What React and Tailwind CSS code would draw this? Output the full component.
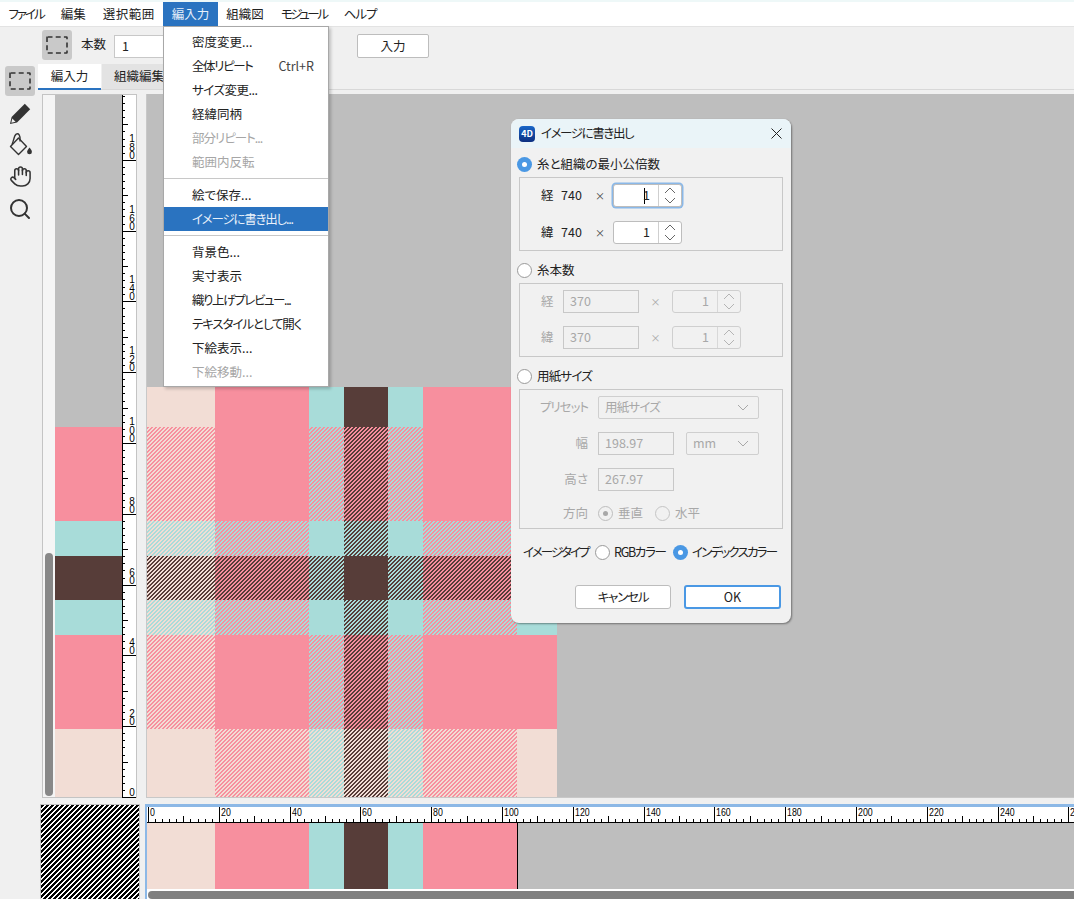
import React from "react";
import { Hand, Search } from "lucide-react";

const BEIGE = "#f2ddd5", PINK = "#f78f9e", TEAL = "#a8dcd9", BROWN = "#573d39";
const REPEAT_WARP = [[68, BEIGE], [94, PINK], [35, TEAL], [44, BROWN], [35, TEAL], [94, PINK]];
const WARP = [...REPEAT_WARP, [40, BEIGE]];
const WEFT = [[40, BEIGE], [94, PINK], [35, TEAL], [44, BROWN], [35, TEAL], [94, PINK], [68, BEIGE]];

function Stripes({ id, a, b, period = 4, on = 2 }) {
  const cells = [];
  for (let y = 0; y < period; y++) for (let x = 0; x < period; x++) if ((x + y) % period < on) cells.push(<rect key={x + "-" + y} x={x} y={y} width="1" height="1" fill={b} />);
  return (
    <pattern id={id} width={period} height={period} patternUnits="userSpaceOnUse">
      <rect width={period} height={period} fill={a} />
      {cells}
    </pattern>
  );
}

function Weave() {
  const colors = [BEIGE, PINK, TEAL, BROWN];
  const pats = [];
  colors.forEach((a, i) => colors.forEach((b, j) => { if (i !== j) pats.push(<Stripes key={i + "" + j} id={"w" + i + j} a={a} b={b} />); }));
  const rects = [];
  let y = 0;
  WEFT.forEach(([h, wc], r) => {
    let x = 0;
    WARP.forEach(([w, c], q) => {
      let fill = c;
      if (r === 0) fill = c;
      else if (q === WARP.length - 1) fill = wc;
      else if (c !== wc) fill = `url(#w${colors.indexOf(c)}${colors.indexOf(wc)})`;
      rects.push(<rect key={r + "-" + q} x={x} y={y} width={w} height={h} fill={fill} />);
      x += w;
    });
    y += h;
  });
  return (
    <svg width="410" height="410" shapeRendering="crispEdges" className="block">
      <defs>{pats}</defs>
      {rects}
    </svg>
  );
}

function VRuler() {
  const items = [];
  for (let u = 0; u <= 198; u += 2) {
    const y = Math.round(797 - 3.54 * u) + 0.5;
    const len = u % 20 === 0 ? 14 : u % 10 === 0 ? 6 : 3;
    items.push(<line key={u} x1="122" x2={122 + len} y1={y} y2={y} stroke="#000" shapeRendering="crispEdges" />);
    if (u % 20 === 0) {
      const s = String(u).split("");
      const bottom = u === 0 ? 796 : y - 1.5;
      items.push(
        <text key={"t" + u} fontSize="10" textAnchor="middle" fill="#000" fontFamily="Liberation Sans">
          {s.map((d, i) => (
            <tspan key={i} x="132" y={bottom - (s.length - 1 - i) * 8.3}>{d}</tspan>
          ))}
        </text>
      );
    }
  }
  return (
    <svg width="14" height="703" viewBox="122 95 14 703" className="block shrink-0 bg-white">
      <line x1="122.5" x2="122.5" y1="95" y2="798" stroke="#000" shapeRendering="crispEdges" />
      {items}
    </svg>
  );
}

function HRuler() {
  const items = [];
  for (let u = 0; u <= 262; u += 2) {
    const x = Math.round(148 + 3.54 * u) + 0.5;
    const len = u % 20 === 0 ? 15 : u % 10 === 0 ? 6 : 3;
    items.push(<line key={u} x1={x} x2={x} y1="822" y2={822 - len} stroke="#000" shapeRendering="crispEdges" />);
    if (u % 20 === 0) {
      const s = String(u);
      items.push(<text key={"t" + u} x={x + 1.5} y="816" fontSize="10.5" fill="#000" fontFamily="Liberation Sans" textLength={s.length * 4.9} lengthAdjust="spacingAndGlyphs">{s}</text>);
    }
  }
  return (
    <svg width="927" height="16" viewBox="147 807 927 16" className="block shrink-0 bg-white">
      <line x1="147" x2="1074" y1="822.5" y2="822.5" stroke="#000" shapeRendering="crispEdges" />
      {items}
    </svg>
  );
}

function DashedSquare() {
  return (
    <svg width="22" height="18" viewBox="0 0 22 18" fill="none" stroke="#333" strokeWidth="1.6">
      <rect x="1" y="1" width="20" height="16" rx="0.5" strokeDasharray="5 3.2" />
    </svg>
  );
}

function Pencil() {
  return (
    <svg width="22" height="22" viewBox="0 0 22 22">
      <path d="M15.8.8 21.2 6.2 8 19.4 1 21 2.6 14Z" fill="#333" />
      <path d="M3.3 15.4 6.6 18.7 2.3 19.7Z" fill="#f0f0f0" />
    </svg>
  );
}

function Bucket() {
  return (
    <svg width="24" height="24" viewBox="0 0 24 24" fill="none" stroke="#333" strokeWidth="1.4">
      <path d="M9.5 5 17.5 13.5 9.5 21.5 1.5 13.5Z" strokeLinejoin="round" />
      <path d="M3 11.5C5 7 5 2.5 7.2 1.2 9.5 0 11.5 2 11 8.5" />
      <path d="M20.6 14.5c1.6 2.2 2.3 3.2 2.3 4.4a2.4 2.4 0 0 1-4.8 0c0-1.2.9-2.4 2.5-4.4Z" fill="#333" stroke="none" />
    </svg>
  );
}

function Chevron({ up, color }) {
  return (
    <svg width="12" height="7" viewBox="0 0 12 7" fill="none" stroke={color} strokeWidth="1">
      <path d={up ? "M1 6 6 1 11 6" : "M1 1 6 6 11 1"} />
    </svg>
  );
}

function Radio({ on, disabled }) {
  if (on && disabled) {
    return (
      <span className="w-[15px] h-[15px] shrink-0 rounded-full border border-[#bdbdbd] flex items-center justify-center">
        <span className="w-[5px] h-[5px] rounded-full bg-[#a8a8a8]" />
      </span>
    );
  }
  if (on) {
    return (
      <span className="w-[15px] h-[15px] shrink-0 rounded-full bg-[#4a98e4] flex items-center justify-center">
        <span className="w-[5px] h-[5px] rounded-full bg-white" />
      </span>
    );
  }
  return <span className={`w-[15px] h-[15px] shrink-0 rounded-full border ${disabled ? "border-[#c4c4c4]" : "border-[#9a9a9a] bg-white"}`} />;
}

function Spinner({ disabled, focused }) {
  const chev = disabled ? "#b4b4b4" : "#666";
  return (
    <div className={`flex w-[69px] h-[23px] rounded-[3px] border ${disabled ? "border-[#cfcfcf] text-[#a8a8a8]" : "border-[#bdbdbd] bg-white text-[#222]"} ${focused ? "border-[#6aa5e0] shadow-[0_0_0_1.5px_#8ab8e8]" : ""}`}>
      <div className={`w-[45px] flex items-center justify-end pr-[8px] border-r ${disabled ? "border-[#d8d8d8]" : "border-[#cfcfcf]"}`}>
        {focused && <span className="h-[16px] border-l border-black mr-[-2px]" />}
        <span>1</span>
      </div>
      <div className="flex-1 flex flex-col items-center justify-center gap-[3px]">
        <Chevron up color={chev} />
        <Chevron color={chev} />
      </div>
    </div>
  );
}

function Field({ w, children }) {
  return <div className={`${w} h-[23px] border border-[#c8c8c8] flex items-center pl-[6px] text-[#a8a8a8]`}>{children}</div>;
}

function Select({ w, label, track }) {
  return (
    <div className={`${w} h-[23px] rounded-[2px] border border-[#cfcfcf] flex items-center justify-between pl-[6px] pr-[9px] text-[#a8a8a8]`}>
      <span className={track || ""}>{label}</span>
      <Chevron color="#a8a8a8" />
    </div>
  );
}

function Section({ label, on, first, track, children }) {
  return (
    <div className={first ? "mt-[8px]" : "mt-[11px]"}>
      <div className="flex items-center h-[16px] gap-[5px] text-[#222]">
        <Radio on={on} />
        <span className={track || ""}>{label}</span>
      </div>
      <div className="mt-[5px] ml-[2px] w-[264px] border border-[#c8c8c8] pt-[6px] flex flex-col">{children}</div>
    </div>
  );
}

function CountRow({ k, val, focused, className }) {
  return (
    <div className={`flex items-center h-[23px] pl-[21px] text-[#222] ${className || ""}`}>
      <span className="w-[20px]">{k}</span>
      <span className="w-[34px]">{val}</span>
      <span className="w-[18px] text-[10px] text-[#444]">×</span>
      <Spinner focused={focused} />
    </div>
  );
}

function ThreadRow({ k, val, className }) {
  return (
    <div className={`flex items-center h-[23px] pl-[21px] text-[#a8a8a8] ${className || ""}`}>
      <span className="w-[22px]">{k}</span>
      <Field w="w-[76px]">{val}</Field>
      <span className="w-[33px] text-center text-[10px]">×</span>
      <Spinner disabled />
    </div>
  );
}

function Dialog() {
  return (
    <div className="absolute left-[511px] top-[119px] w-[280px] h-[504px] rounded-[8px] bg-[#f1f1f1] shadow-[1px_1px_2px_rgba(0,0,0,0.4)] overflow-hidden">
      <div className="h-[29px] bg-[#eaf4f8] flex items-center pl-[8px] pr-[9px] text-[#222]">
        <span className="w-[16px] h-[16px] rounded-[4px] bg-gradient-to-b from-[#1a66c8] to-[#0d2f80] text-white text-[9px] font-bold flex items-center justify-center">4D</span>
        <span className="ml-[6px] flex-1 tracking-[-1.4px]">イメージに書き出し</span>
        <svg width="11" height="11" viewBox="0 0 11 11" stroke="#222" strokeWidth="1"><path d="M.5.5l10 10M10.5.5l-10 10" /></svg>
      </div>
      <div className="pl-[6px]">
        <Section first on label="糸と組織の最小公倍数">
          <CountRow k="経" val="740" focused />
          <CountRow k="緯" val="740" className="mt-[14px] mb-[6px]" />
        </Section>
        <Section label="糸本数">
          <ThreadRow k="経" val="370" />
          <ThreadRow k="緯" val="370" className="mt-[13px] mb-[7px]" />
        </Section>
        <Section label="用紙サイズ" track="tracking-[-0.8px]">
          <div className="flex items-center h-[23px] text-[#a8a8a8]">
            <span className="w-[68px] text-right mr-[10px] tracking-[-1px]">プリセット</span>
            <Select w="w-[161px]" label="用紙サイズ" track="tracking-[-0.8px]" />
          </div>
          <div className="flex items-center h-[23px] mt-[13px] text-[#a8a8a8]">
            <span className="w-[68px] text-right mr-[10px]">幅</span>
            <Field w="w-[76px]">198.97</Field>
            <div className="w-[12px]" />
            <Select w="w-[73px]" label="mm" />
          </div>
          <div className="flex items-center h-[23px] mt-[13px] text-[#a8a8a8]">
            <span className="w-[68px] text-right mr-[10px]">高さ</span>
            <Field w="w-[76px]">267.97</Field>
          </div>
          <div className="flex items-center h-[23px] mt-[11px] mb-[3px] text-[#a8a8a8]">
            <span className="w-[68px] text-right mr-[10px]">方向</span>
            <Radio on disabled />
            <span className="ml-[5px] w-[37px]">垂直</span>
            <Radio disabled />
            <span className="ml-[5px]">水平</span>
          </div>
        </Section>
        <div className="mt-[15px] ml-[6px] h-[17px] flex items-center text-[#222]">
          <span className="w-[72px] whitespace-nowrap tracking-[-2px]">イメージタイプ</span>
          <Radio />
          <span className="ml-[4px] w-[59px] whitespace-nowrap tracking-[-1.3px]">RGBカラー</span>
          <Radio on />
          <span className="ml-[4px] whitespace-nowrap tracking-[-1.8px]">インデックスカラー</span>
        </div>
        <div className="mt-[24px] ml-[58px] flex gap-[13px] text-[#222]">
          <button className="w-[96px] h-[24px] rounded-[3px] border border-[#bdbdbd] bg-white flex items-center justify-center tracking-[-1.2px]">キャンセル</button>
          <button className="w-[97px] h-[24px] rounded-[3px] border-2 border-[#4a98e4] bg-white flex items-center justify-center">OK</button>
        </div>
      </div>
    </div>
  );
}

function MenuRow({ label, shortcut, disabled, active, track }) {
  return (
    <div className={`h-[24px] flex items-center pl-[28px] pr-[14px] justify-between ${active ? "bg-[#2a73c0] text-[#e8f0fa]" : disabled ? "text-[#a6a6a6]" : "text-[#222]"}`}>
      <span className={`whitespace-nowrap ${track || ""}`}>{label}</span>
      {shortcut && <span className="text-[#444]">{shortcut}</span>}
    </div>
  );
}

function Sep() {
  return <div className="h-[9px] pt-[4px]"><div className="h-[1px] bg-[#c8c8c8]" /></div>;
}

function Dropdown() {
  return (
    <div className="absolute left-[163px] top-[26px] w-[166px] h-[361px] bg-white border border-[#a8a8a8] pt-[3px] shadow-[2px_2px_3px_rgba(0,0,0,0.2)]">
      <MenuRow label="密度変更..." />
      <MenuRow label="全体リピート" shortcut="Ctrl+R" track="tracking-[-1.4px]" />
      <MenuRow label="サイズ変更..." track="tracking-[-0.5px]" />
      <MenuRow label="経緯同柄" />
      <MenuRow label="部分リピート..." disabled track="tracking-[-1px]" />
      <MenuRow label="範囲内反転" disabled />
      <Sep />
      <MenuRow label="絵で保存..." />
      <MenuRow label="イメージに書き出し..." active track="tracking-[-1.2px]" />
      <Sep />
      <MenuRow label="背景色..." />
      <MenuRow label="実寸表示" />
      <MenuRow label="織り上げプレビュー..." track="tracking-[-1.4px]" />
      <MenuRow label="テキスタイルとして開く" track="tracking-[-1.1px]" />
      <MenuRow label="下絵表示..." />
      <MenuRow label="下絵移動..." disabled />
    </div>
  );
}

const MENUS = [
  ["ファイル", "tracking-[-2px]"],
  ["編集", ""],
  ["選択範囲", "tracking-[0.5px]"],
  ["編入力", ""],
  ["組織図", ""],
  ["モジュール", "tracking-[-2.4px]"],
  ["ヘルプ", "tracking-[-1px]"],
];

export default function App() {
  return (
    <div className="relative w-[1074px] h-[899px] overflow-hidden bg-[#f0f0f0] text-[12.5px] leading-none font-['Noto_Sans_CJK_JP','Noto_Sans_CJK_SC',sans-serif] [font-feature-settings:'palt']">
      <div className="h-[2px] bg-[#eef8f8]" />
      <div className="h-[24px] bg-white flex text-[#222]">
        {MENUS.map(([m, t], i) => (
          <div key={m} className={`h-full flex items-center px-[8.5px] ${t} ${i === 3 ? "bg-[#2a73c0] text-[#e8f0fa]" : ""}`}>{m}</div>
        ))}
      </div>
      <div className="h-[1px] bg-[#e3e3e3]" />
      <div className="h-[37px] flex items-start pl-[42px] pt-[3px]">
        <div className="w-[30px] h-[30px] rounded-[3px] bg-[#c9c9c9] flex items-center justify-center"><DashedSquare /></div>
        <span className="ml-[9px] mt-[8px] text-[#222]">本数</span>
        <div className="ml-[8px] mt-[5px] w-[60px] h-[23px] border border-[#c8c8c8] bg-white flex items-center pl-[7px] text-[#222]">1</div>
        <button className="ml-[183px] mt-[4px] w-[72px] h-[24px] rounded-[2px] border border-[#bdbdbd] bg-white text-[#222] flex items-center justify-center">入力</button>
      </div>
      <div className="flex h-[835px]">
        <div className="w-[38px] shrink-0 pt-[2px] pl-[5px] flex flex-col">
          <div className="w-[30px] h-[30px] rounded-[3px] bg-[#c9c9c9] flex items-center justify-center"><DashedSquare /></div>
          <div className="mt-[2px] w-[30px] h-[31px] flex items-center justify-center"><Pencil /></div>
          <div className="w-[30px] h-[31px] flex items-center justify-center ml-[1px]"><Bucket /></div>
          <div className="w-[30px] h-[33px] flex items-center justify-center"><Hand size={23} strokeWidth={1.6} color="#333" /></div>
          <div className="w-[30px] h-[31px] flex items-center justify-center"><Search size={24} strokeWidth={2} color="#333" /></div>
        </div>
        <div className="flex-1 flex flex-col min-w-0">
          <div className="h-[26px] flex border-b border-[#d8d8d8] text-[#222]">
            <div className="w-[63px] h-[26px] bg-white border-b-2 border-[#2a73c0] flex items-center justify-center">編入力</div>
            <div className="ml-[1px] w-[90px] h-[25px] bg-[#e3e3e3] flex items-center pl-[12px]">組織編集</div>
          </div>
          <div className="mt-[4px] flex h-[704px]">
            <div className="ml-[4px] w-[95px] h-[704px] border border-[#c4c4c4] flex bg-[#f5f5f5]">
              <div className="w-[12px] flex flex-col justify-end items-center pb-[1px]">
                <div className="w-[8px] h-[243px] rounded-full bg-[#888]" />
              </div>
              <div className="w-[67px] bg-[#bebebe] flex flex-col justify-end">
                {[...REPEAT_WARP].reverse().map(([h, c], i) => (
                  <div key={i} style={{ height: h, backgroundColor: c }} />
                ))}
              </div>
              <VRuler />
            </div>
            <div className="ml-[9px] flex-1 h-[704px] border-l border-b border-[#c8c8c8] bg-[#bebebe] flex flex-col justify-end">
              <Weave />
            </div>
          </div>
          <div className="mt-[6px] flex h-[95px]">
            <div className="ml-[2px] w-[100px] h-[100px] border border-[#c4c4c4] bg-white shrink-0">
              <svg width="98" height="98" shapeRendering="crispEdges" className="block">
                <defs><Stripes id="bw" a="#fff" b="#000" period={5} on={3} /></defs>
                <rect width="98" height="98" fill="url(#bw)" />
              </svg>
            </div>
            <div className="ml-[5px] flex-1 border-l-2 border-t-[3px] border-[#8cb8e6] flex flex-col min-w-0 bg-white">
              <HRuler />
              <div className="h-[66px] bg-[#bebebe] flex shrink-0">
                {REPEAT_WARP.map(([w, c], i) => (
                  <div key={i} style={{ width: w, backgroundColor: c }} />
                ))}
                <div className="w-[1px] bg-black" />
              </div>
              <div className="flex-1 pt-[2px] pl-[1px]">
                <div className="h-[8px] rounded-l-full bg-[#808080]" />
              </div>
            </div>
          </div>
        </div>
      </div>
      <Dropdown />
      <Dialog />
    </div>
  );
}
